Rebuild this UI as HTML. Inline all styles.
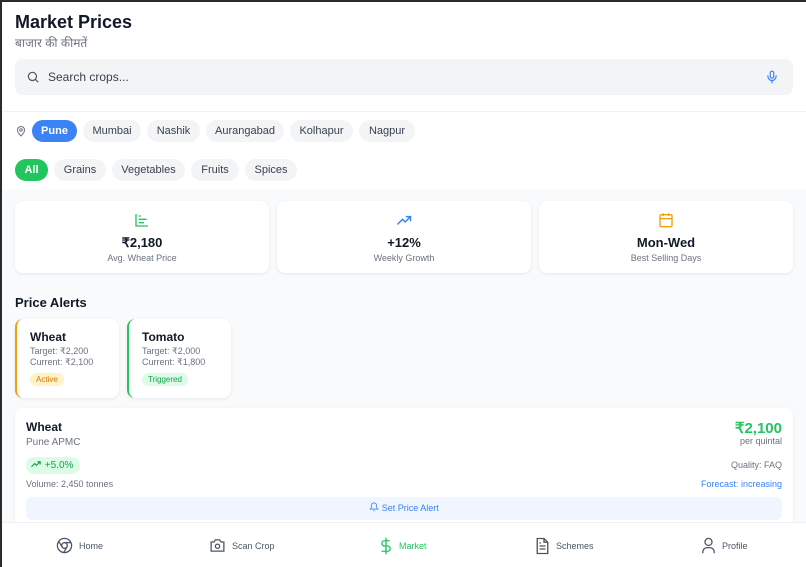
<!DOCTYPE html>
<html><head><meta charset="utf-8"><style>
*{box-sizing:border-box;margin:0;padding:0}
body{width:806px;height:567px;overflow:hidden;background:#f9fafb;font-family:"Liberation Sans","Noto Sans CJK SC",sans-serif;color:#111827;position:relative}
.a{position:absolute}
.frameT{left:0;top:0;width:806px;height:2px;background:#2b2b2b;z-index:10}
.frameL{left:0;top:0;width:2px;height:567px;background:#2b2b2b;z-index:10}
.header{left:0;top:0;width:806px;height:190px;background:#fff}
.chip{position:absolute;height:22px;line-height:22px;border-radius:11px;background:#f3f4f6;color:#374151;font-size:11px;text-align:center}
.card{position:absolute;background:#fff;border-radius:8px;box-shadow:0 1px 3px rgba(0,0,0,.08)}
.stat{top:201px;height:72px;width:254px;text-align:center}
.stat b{display:block;position:absolute;top:34px;width:100%;font-size:13px;font-weight:bold}
.stat span{display:block;position:absolute;top:52px;width:100%;font-size:9px;color:#6b7280}
.stat svg{position:absolute;top:11px;left:119px}
.al{top:319px;height:79px;width:104px}
.al .t{position:absolute;left:13px;top:11px;font-size:12px;font-weight:bold}
.al .l{position:absolute;left:13px;font-size:9px;color:#6b7280}
.nav{left:0;top:522px;width:806px;height:45px;background:#fff;border-top:1px solid #eef0f2}
.ni{position:absolute;top:14px;font-size:9px;color:#4b5563;display:flex;align-items:center;gap:6px}
</style></head><body>
<div class="a frameT"></div><div class="a frameL"></div>
<div class="a header"></div>
<div class="a" style="left:15px;top:12px;font-size:18px;font-weight:bold">Market Prices</div>
<div class="a" style="left:15px;top:34px;font-size:12px;color:#6b7280;font-family:'Liberation Sans','Noto Sans CJK SC','DejaVu Sans',sans-serif">बाजार की कीमतें</div>
<div class="a" style="left:15px;top:59px;width:778px;height:36px;background:#f3f4f6;border-radius:8px"></div>
<svg class="a" style="left:26px;top:70px" width="14" height="14" viewBox="0 0 24 24" fill="none" stroke="#4b5563" stroke-width="2"><circle cx="11" cy="11" r="7"/><path d="M21 21l-5-5"/></svg>
<div class="a" style="left:48px;top:70px;font-size:12px;color:#374151">Search crops...</div>
<svg class="a" style="left:765px;top:70px" width="14" height="14" viewBox="0 0 24 24" fill="none" stroke="#3b82f6" stroke-width="2" stroke-linecap="round"><rect x="9" y="2" width="6" height="12" rx="3"/><path d="M5 10v1a7 7 0 0 0 14 0v-1M12 18v4"/></svg>
<div class="a" style="left:2px;top:111px;width:804px;height:1px;background:#f0f1f3"></div>
<svg class="a" style="left:15px;top:125px" width="12" height="12" viewBox="0 0 24 24" fill="none" stroke="#6b7280" stroke-width="2"><path d="M12 22s7-6.5 7-12a7 7 0 0 0-14 0c0 5.5 7 12 7 12z"/><circle cx="12" cy="10" r="2.5"/></svg>
<div class="chip" style="left:32px;top:120px;width:45px;background:#3b82f6;color:#fff;font-weight:bold">Pune</div>
<div class="chip" style="left:83px;top:120px;width:58px">Mumbai</div>
<div class="chip" style="left:147px;top:120px;width:53px">Nashik</div>
<div class="chip" style="left:206px;top:120px;width:78px">Aurangabad</div>
<div class="chip" style="left:290px;top:120px;width:63px">Kolhapur</div>
<div class="chip" style="left:359px;top:120px;width:56px">Nagpur</div>
<div class="chip" style="left:15px;top:159px;width:33px;background:#22c55e;color:#fff;font-weight:bold">All</div>
<div class="chip" style="left:54px;top:159px;width:52px">Grains</div>
<div class="chip" style="left:112px;top:159px;width:73px">Vegetables</div>
<div class="chip" style="left:191px;top:159px;width:48px">Fruits</div>
<div class="chip" style="left:245px;top:159px;width:52px">Spices</div>

<div class="card stat" style="left:15px"><svg width="16" height="16" viewBox="0 0 24 24" fill="none" stroke="#22c55e" stroke-width="2"><path d="M3 3v18h18M7 16h8M7 11h12M7 6h3"/></svg><b>₹2,180</b><span>Avg. Wheat Price</span></div>
<div class="card stat" style="left:277px"><svg width="17" height="16" viewBox="0 0 24 24" fill="none" stroke="#3b82f6" stroke-width="2.2" stroke-linecap="round"><path d="M2 18l7-7 4 4 8-8M15 7h6v6"/></svg><b>+12%</b><span>Weekly Growth</span></div>
<div class="card stat" style="left:539px"><svg width="16" height="16" viewBox="0 0 24 24" fill="none" stroke="#f59e0b" stroke-width="2"><rect x="3" y="4" width="18" height="18" rx="2"/><path d="M3 10h18M8 2v4M16 2v4"/></svg><b>Mon-Wed</b><span>Best Selling Days</span></div>

<div class="a" style="left:15px;top:295px;font-size:13px;font-weight:bold">Price Alerts</div>
<div class="card al" style="left:15px;border-left:2px solid #f59e0b"><div class="t">Wheat</div><div class="l" style="top:27px">Target: ₹2,200</div><div class="l" style="top:38px">Current: ₹2,100</div><div class="a" style="left:13px;top:54px;height:13px;padding:0 6px;line-height:13px;border-radius:7px;background:#fef3c7;color:#d97706;font-size:8px">Active</div></div>
<div class="card al" style="left:127px;border-left:2px solid #22c55e"><div class="t">Tomato</div><div class="l" style="top:27px">Target: ₹2,000</div><div class="l" style="top:38px">Current: ₹1,800</div><div class="a" style="left:13px;top:54px;height:13px;padding:0 6px;line-height:13px;border-radius:7px;background:#dcfce7;color:#16a34a;font-size:8px">Triggered</div></div>

<div class="card" style="left:15px;top:408px;width:778px;height:130px"></div>
<div class="a" style="left:26px;top:420px;font-size:12px;font-weight:bold">Wheat</div>
<div class="a" style="left:26px;top:437px;font-size:10px;color:#6b7280">Pune APMC</div>
<div class="a" style="left:26px;top:457px;width:54px;height:17px;border-radius:8px;background:#dcfce7;color:#16a34a;font-size:10px;line-height:17px;padding-left:5px"><svg width="11" height="8" viewBox="0 0 24 16" fill="none" stroke="#16a34a" stroke-width="2.5"><path d="M1 14l7-7 4 4 8-8M14 3h6v6"/></svg> +5.0%</div>
<div class="a" style="left:26px;top:479px;font-size:9px;color:#6b7280">Volume: 2,450 tonnes</div>
<div class="a" style="right:24px;top:419px;font-size:15px;font-weight:bold;color:#22c55e">₹2,100</div>
<div class="a" style="right:24px;top:436px;font-size:9px;color:#6b7280">per quintal</div>
<div class="a" style="right:24px;top:460px;font-size:9px;color:#6b7280">Quality: FAQ</div>
<div class="a" style="right:24px;top:479px;font-size:9px;color:#3b82f6">Forecast: increasing</div>
<div class="a" style="left:26px;top:497px;width:756px;height:23px;border-radius:6px;background:#eff6ff;color:#3b82f6;font-size:9px;text-align:center;line-height:23px"><svg width="10" height="10" viewBox="0 0 24 24" fill="none" stroke="#3b82f6" stroke-width="2" style="vertical-align:-1px"><path d="M6 8a6 6 0 0 1 12 0c0 7 3 9 3 9H3s3-2 3-9M10 21h4"/></svg> Set Price Alert</div>

<div class="a nav">
<div class="ni" style="left:56px"><svg width="17" height="17" viewBox="0 0 24 24" fill="none" stroke="#4b5563" stroke-width="1.8"><circle cx="12" cy="12" r="10"/><circle cx="12" cy="12" r="4"/><path d="M12 8h9M8.5 14L4 6.5M15.5 14L11 21.8"/></svg>Home</div>
<div class="ni" style="left:209px"><svg width="17" height="17" viewBox="0 0 24 24" fill="none" stroke="#4b5563" stroke-width="1.8"><path d="M3 7h4l2-3h6l2 3h4v13H3z"/><circle cx="12" cy="13" r="3"/></svg>Scan Crop</div>
<div class="ni" style="left:379px;color:#22c55e"><svg width="14" height="18" viewBox="0 0 16 24" fill="none" stroke="#22c55e" stroke-width="1.8"><path d="M8 1v22M13 5H6a3.5 3.5 0 0 0 0 7h4a3.5 3.5 0 0 1 0 7H2"/></svg>Market</div>
<div class="ni" style="left:535px"><svg width="15" height="18" viewBox="0 0 20 24" fill="none" stroke="#4b5563" stroke-width="1.8"><path d="M12 2H3v20h14V7z"/><path d="M12 2v5h5M6 12h8M6 16h8M6 8h2"/></svg>Schemes</div>
<div class="ni" style="left:701px"><svg width="15" height="17" viewBox="0 0 20 24" fill="none" stroke="#4b5563" stroke-width="1.8"><circle cx="10" cy="7" r="5"/><path d="M2 23v-2a6 6 0 0 1 6-6h4a6 6 0 0 1 6 6v2"/></svg>Profile</div>
</div>
</body></html>
